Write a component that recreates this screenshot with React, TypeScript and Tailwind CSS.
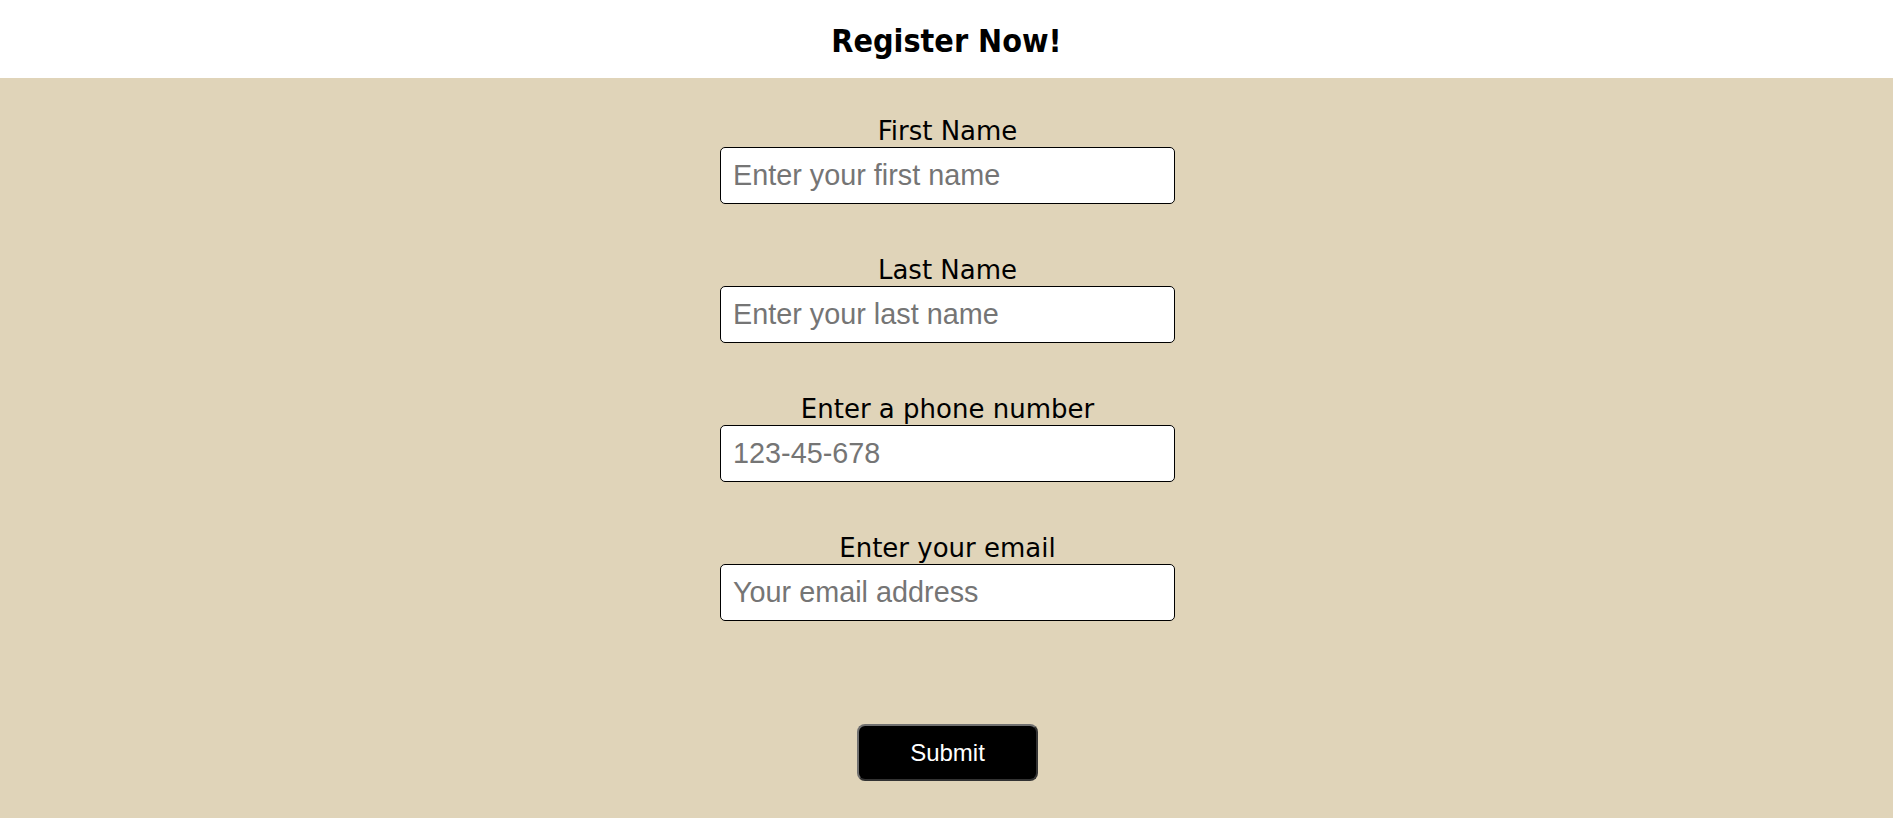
import React from "react";

const fields = [
  { label: "First Name", placeholder: "Enter your first name", type: "text" },
  { label: "Last Name", placeholder: "Enter your last name", type: "text" },
  { label: "Enter a phone number", placeholder: "123-45-678", type: "tel" },
  { label: "Enter your email", placeholder: "Your email address", type: "email" },
];

export default function App() {
  return (
    <div className="min-h-screen bg-white">
      {/* Header */}
      <header className="h-[78px] flex items-center justify-center bg-white">
        <h1 className="text-[32px] font-bold text-black leading-none pt-[3px] font-['DejaVu_Sans_Condensed','DejaVu_Sans',sans-serif]">
          Register Now!
        </h1>
      </header>

      {/* Form */}
      <main className="bg-[#e0d4b9] pt-[38px] pb-[37px]">
        <form
          className="flex flex-col items-center pl-[2px]"
          onSubmit={(e) => e.preventDefault()}
        >
          <div className="flex flex-col items-center gap-[51px]">
            {fields.map((f) => (
              <div key={f.label} className="flex flex-col items-center">
                <label className="block text-[26px] leading-[30px] mb-px text-black font-['DejaVu_Sans',sans-serif]">
                  {f.label}
                </label>
                <input
                  type={f.type}
                  placeholder={f.placeholder}
                  className="w-[455px] h-[57px] bg-white border border-black rounded-[5px] pl-[12px] text-[28.8px] text-black placeholder:text-[#757575] font-['Liberation_Sans',Arial,sans-serif] outline-none"
                />
              </div>
            ))}
          </div>

          <button
            type="submit"
            className="mt-[103px] w-[181px] h-[57px] bg-black text-white text-[24px] rounded-lg border-2 border-solid border-t-[#707070] border-l-[#707070] border-r-[#333333] border-b-[#333333] font-['Liberation_Sans',Arial,sans-serif]"
          >
            Submit
          </button>
        </form>
      </main>
    </div>
  );
}
